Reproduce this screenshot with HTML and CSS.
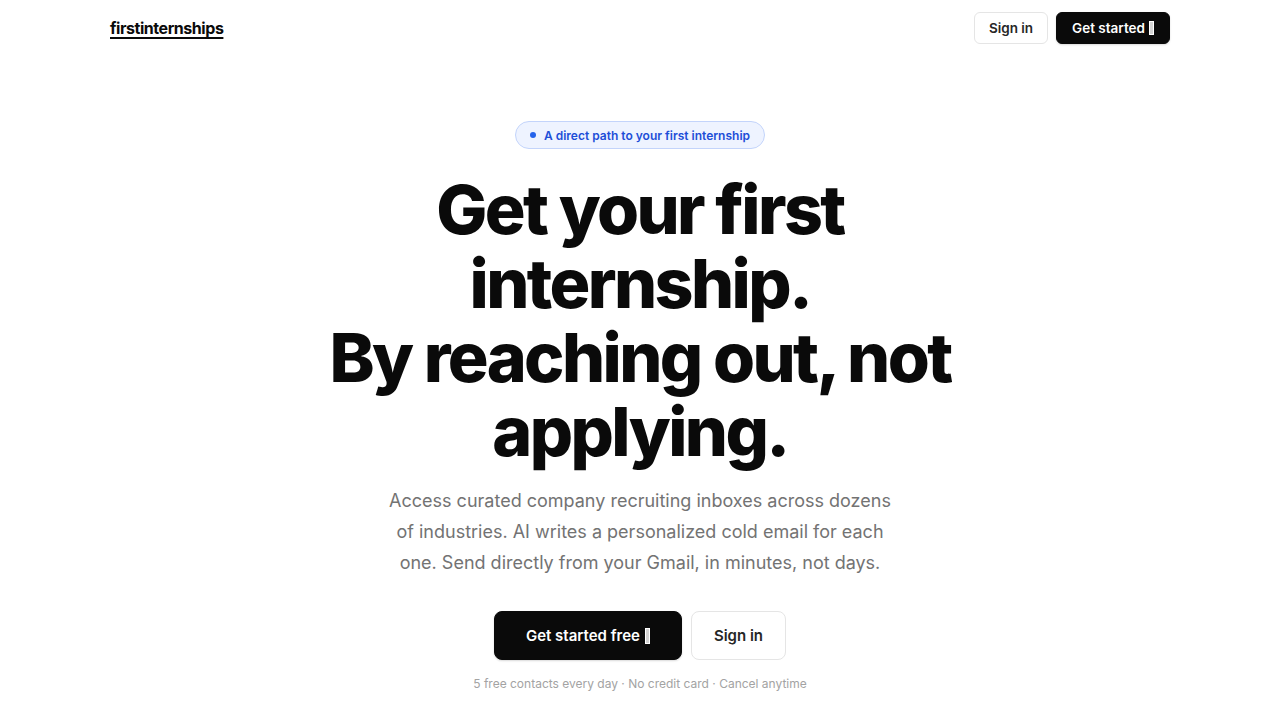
FILE: index.html
```html
<!DOCTYPE html>
<html lang="en">
<head>
  <meta charset="UTF-8" />
  <title>firstinternships</title>
  <link rel="stylesheet" href="styles.css">
</head>
<body>
  <header class="nav">
    <a class="logo" href="#">firstinternships</a>
    <div class="nav-actions">
      <a class="btn btn-outline" href="#">Sign in</a>
      <a class="btn btn-dark" href="#">Get started <span class="tofu"></span></a>
    </div>
  </header>

  <main class="hero">
    <div class="badge"><span class="dot"></span>A direct path to your first internship</div>
    <h1>Get your first<br>internship.<br>By reaching out, not<br>applying.</h1>
    <p class="lead">Access curated company recruiting inboxes across dozens of industries. AI writes a personalized cold email for each one. Send directly from your Gmail, in minutes, not days.</p>
    <div class="cta">
      <a class="btn btn-dark btn-lg" href="#">Get started free <span class="tofu"></span></a>
      <a class="btn btn-outline btn-lg" href="#">Sign in</a>
    </div>
    <p class="fine">5 free contacts every day · No credit card · Cancel anytime</p>
  </main>
</body>
</html>
```

FILE: styles.css
```css
body {
  margin: 0;
  background: #fff;
  color: #0a0a0a;
  font-family: Inter, "Liberation Sans", sans-serif;
}
a {
  text-decoration: none;
  color: inherit;
}
.nav {
  max-width: 1060px;
  margin: 0 auto;
  height: 56px;
  display: flex;
  align-items: center;
  justify-content: space-between;
}
.logo {
  font-weight: 700;
  font-size: 16px;
  letter-spacing: -0.45px;
  text-decoration: underline;
  text-underline-offset: 3px;
  text-decoration-thickness: 1.5px;
}
.nav-actions {
  display: flex;
  gap: 8px;
}
.btn {
  display: inline-flex;
  align-items: center;
  justify-content: center;
  box-sizing: border-box;
  height: 32px;
  padding: 0 14px;
  border-radius: 6px;
  font-size: 13.5px;
  font-weight: 600;
}
.btn-outline {
  border: 1px solid #e5e5e5;
  background: #fff;
  color: #262626;
}
.btn-dark {
  background: #0a0a0a;
  color: #fff;
  border: 1px solid #0a0a0a;
  box-shadow: 0 1px 2px rgba(0,0,0,0.15);
  padding: 0 15px;
}
/* placeholder box for the arrow glyph */
.tofu {
  display: inline-block;
  width: 5px;
  height: 14px;
  margin-left: 4px;
  background: #d4d4d4;
  border: 1px solid #fff;
  box-sizing: border-box;
}
.hero {
  display: flex;
  flex-direction: column;
  align-items: center;
  text-align: center;
  padding-top: 65px;
}
.badge {
  display: inline-flex;
  align-items: center;
  gap: 8px;
  height: 28px;
  box-sizing: border-box;
  padding: 0 14px;
  border: 1px solid #c3d4fb;
  background: #eef3ff;
  color: #1d4ed8;
  border-radius: 999px;
  font-size: 12px;
  font-weight: 600;
}
.dot {
  width: 6px;
  height: 6px;
  border-radius: 50%;
  background: #2563eb;
}
h1 {
  margin: 23px 0 0;
  font-size: 68px;
  line-height: 74px;
  font-weight: 800;
  letter-spacing: -2.6px;
}
.lead {
  margin: 17px 0 0;
  max-width: 520px;
  font-size: 18px;
  line-height: 31px;
  color: #737373;
}
.cta {
  display: flex;
  gap: 9px;
  margin-top: 33px;
}
.btn-lg {
  height: 49px;
  padding: 0 22px;
  border-radius: 8px;
  font-size: 15px;
}
.btn-dark.btn-lg {
  padding: 0 31px;
}
.btn-lg .tofu {
  height: 16px;
  margin-left: 5px;
}
.fine {
  margin: 16px 0 0;
  font-size: 12px;
  color: #a3a3a3;
}
```
